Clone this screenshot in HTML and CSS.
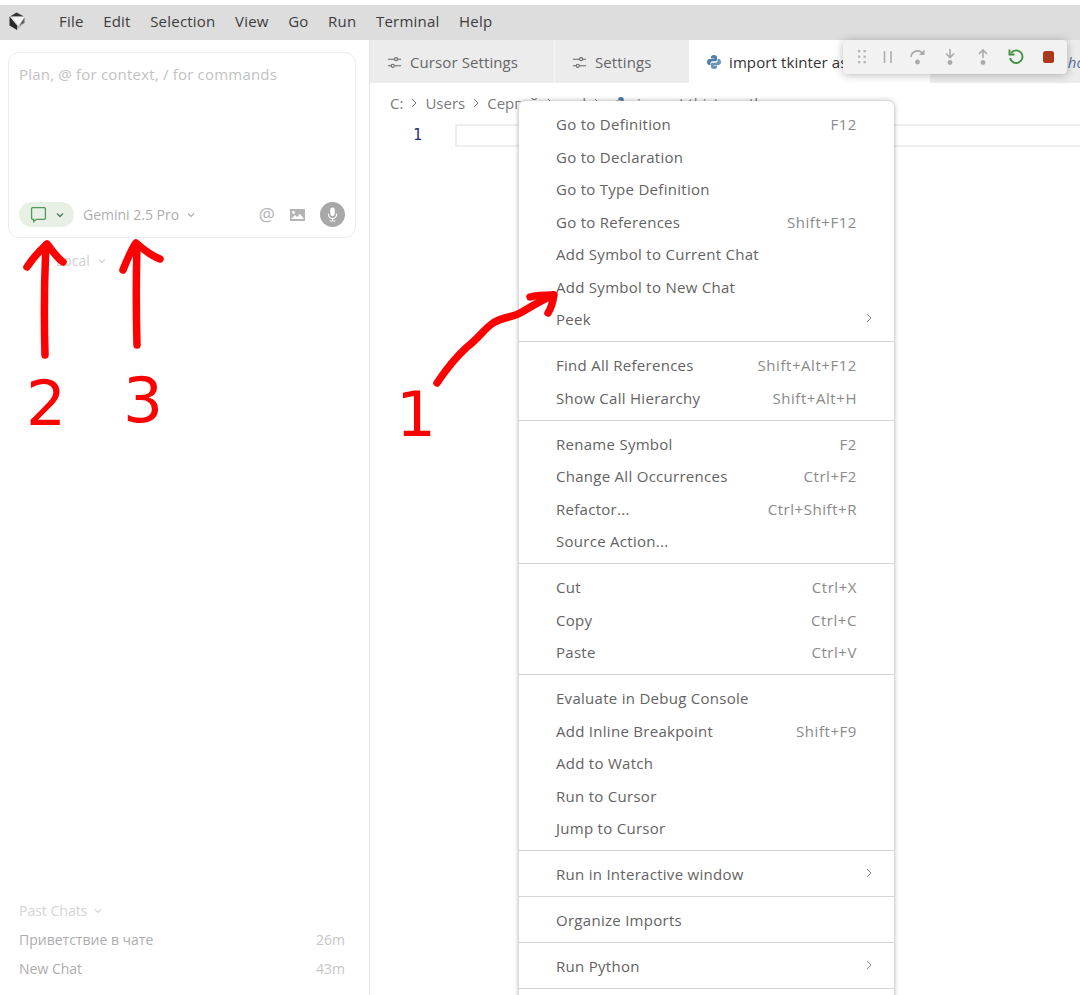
FILE: index.html
```html
<!DOCTYPE html>
<html lang="en">
<head>
<meta charset="utf-8">
<title>Cursor</title>
<link rel="stylesheet" href="styles.css">
</head>
<body>
<div class="app">
  <header class="menubar">
    <svg class="logo" viewBox="0 0 18 18"><polygon points="8.500,0.500 16,4.500 2,4.500" fill="#333"/><polygon points="1.500,4.500 9.500,14 9,18 1.500,13.500" fill="#2a2a2a"/><polygon points="16.500,5 16.500,11 11,14" fill="#666"/><polygon points="9.500,14 16,11.500 9,18" fill="#b5b5b5"/><polygon points="4,4.800 17,4.800 10.500,13" fill="#f4f4f4"/></svg>
    <nav class="menus"><span>File</span><span>Edit</span><span>Selection</span><span>View</span><span>Go</span><span>Run</span><span>Terminal</span><span>Help</span></nav>
  </header>
  <div class="main">
    <aside class="sidebar">
      <div class="sidebar-top">
        <div class="composer">
          <div class="placeholder">Plan, @ for context, / for commands</div>
          <div class="composer-bar">
            <div class="mode-pill">
              <svg class="pill-chat" viewBox="0 0 16 16"><path d="M2.500 1.500h11a1 1 0 0 1 1 1v9a1 1 0 0 1-1 1H6l-2.500 2.200V12.500h-1a1 1 0 0 1-1-1v-9a1 1 0 0 1 1-1z" fill="none" stroke="#4c9a55" stroke-width="1.200"/></svg>
              <svg class="chev chev-green" viewBox="0 0 10 10"><path d="M2 3.500 5 6.500 8 3.500" fill="none" stroke="#4a7a55" stroke-width="1.300"/></svg>
            </div>
            <div class="model">Gemini 2.5 Pro <svg class="chev" viewBox="0 0 10 10"><path d="M2 3.500 5 6.500 8 3.500" fill="none" stroke="#aaa" stroke-width="1.100"/></svg></div>
            <div class="bar-icons">
              <span class="at">@</span>
              <svg class="img-icon" viewBox="0 0 17 14"><path d="M1 1h15v12H1z" fill="#b4b4b4"/><circle cx="4.500" cy="4.500" r="1.400" fill="#fff"/><path d="M2 11 6 7 8 9 11 6 15 11z" fill="#fff"/></svg>
              <div class="mic"><svg viewBox="0 0 16 20"><rect x="5.200" y="1.500" width="5.600" height="10.500" rx="2.800" fill="#fff"/><path d="M3 9v1a5 5 0 0 0 10 0V9M8 15v3M4.500 18h7" fill="none" stroke="#fff" stroke-width="1.400"/></svg></div>
            </div>
          </div>
        </div>
        <div class="local">Local <svg class="chev" viewBox="0 0 10 10"><path d="M2 3.500 5 6.500 8 3.500" fill="none" stroke="#d0d0d0" stroke-width="1.100"/></svg></div>
      </div>
      <div class="past">
        <div class="past-head">Past Chats <svg class="chev" viewBox="0 0 10 10"><path d="M2 3.500 5 6.500 8 3.500" fill="none" stroke="#d5d5d5" stroke-width="1.100"/></svg></div>
        <div class="past-row"><span>Приветствие в чате</span><span class="past-time">26m</span></div>
        <div class="past-row"><span>New Chat</span><span class="past-time">43m</span></div>
      </div>
    </aside>
    <section class="editor">
      <div class="tabs">
        <div class="tab tab-one"><svg class="tab-icon" viewBox="0 0 16 16"><path d="M1 4.500h7M11.500 4.500H15M1 11.500h3.500M8 11.500h7" fill="none" stroke="#666" stroke-width="1.100"/><circle cx="9.700" cy="4.500" r="1.700" fill="none" stroke="#666" stroke-width="1.100"/><circle cx="6.200" cy="11.500" r="1.700" fill="none" stroke="#666" stroke-width="1.100"/></svg>Cursor Settings</div>
        <div class="tab tab-two"><svg class="tab-icon" viewBox="0 0 16 16"><path d="M1 4.500h7M11.500 4.500H15M1 11.500h3.500M8 11.500h7" fill="none" stroke="#666" stroke-width="1.100"/><circle cx="9.700" cy="4.500" r="1.700" fill="none" stroke="#666" stroke-width="1.100"/><circle cx="6.200" cy="11.500" r="1.700" fill="none" stroke="#666" stroke-width="1.100"/></svg>Settings</div>
        <div class="tab tab-active"><svg class="py" viewBox="0 0 16 16"><path d="M8 1C5.500 1 5 2 5 3v1.500h3.200V5H3.500C2 5 1 6 1 8s1 3 2.200 3H4.500V9.300C4.500 8 5.500 7.200 6.600 7.200h3C10.500 7.200 11 6.600 11 5.800V3C11 2 10 1 8 1z" fill="#4f7ea8"/><path d="M8 15c2.500 0 3-1 3-2v-1.500H7.800V11h4.700c1.500 0 2.500-1 2.500-3s-1-3-2.200-3H11.500v1.700c0 1.300-1 2.100-2.100 2.100h-3C5.500 8.800 5 9.400 5 10.200V13c0 1 1 2 3 2z" fill="#6a94b8"/></svg>import tkinter as</div>
        <div class="tab-rest"><i>ho</i></div>
      </div>
      <div class="crumbs">
        <span>C:</span><svg class="sep" viewBox="0 0 6 10"><path d="M1 1l4 4-4 4" fill="none" stroke="#777" stroke-width="1"/></svg><span>Users</span><svg class="sep" viewBox="0 0 6 10"><path d="M1 1l4 4-4 4" fill="none" stroke="#777" stroke-width="1"/></svg><span>Сергей</span><svg class="sep" viewBox="0 0 6 10"><path d="M1 1l4 4-4 4" fill="none" stroke="#777" stroke-width="1"/></svg><span>cod</span><svg class="sep" viewBox="0 0 6 10"><path d="M1 1l4 4-4 4" fill="none" stroke="#777" stroke-width="1"/></svg><svg class="py py-small" viewBox="0 0 16 16"><path d="M8 1C5.500 1 5 2 5 3v1.500h3.200V5H3.500C2 5 1 6 1 8s1 3 2.200 3H4.500V9.300C4.500 8 5.500 7.200 6.600 7.200h3C10.500 7.200 11 6.600 11 5.800V3C11 2 10 1 8 1z" fill="#4f7ea8"/></svg><span>import thistpy.pth</span>
      </div>
      <div class="code-line"><span class="line-no">1</span><div class="line-box"></div></div>
    </section>
  </div>

  <div class="debugbar">
    <svg viewBox="0 0 10 16" class="dbg dbg-grip"><g fill="#b5b5b5"><rect x="1" y="1" width="2.300" height="2.300"/><rect x="6.500" y="1" width="2.300" height="2.300"/><rect x="1" y="6.500" width="2.300" height="2.300"/><rect x="6.500" y="6.500" width="2.300" height="2.300"/><rect x="1" y="12" width="2.300" height="2.300"/><rect x="6.500" y="12" width="2.300" height="2.300"/></g></svg>
    <svg viewBox="0 0 12 16" class="dbg dbg-pause"><path d="M2.500 2v12M9 2v12" stroke="#aaa" stroke-width="1.500" fill="none"/></svg>
    <svg viewBox="0 0 18 18" class="dbg"><path d="M2 9a6.500 6.500 0 0 1 12-3" fill="none" stroke="#aaa" stroke-width="1.600"/><path d="M15.500 1.500V7H10z" fill="#aaa"/><circle cx="8.500" cy="14" r="2.400" fill="#aaa"/></svg>
    <svg viewBox="0 0 18 18" class="dbg"><path d="M9 1v8M5 5.500 9 9.500l4-4" fill="none" stroke="#aaa" stroke-width="1.600"/><circle cx="9" cy="14.500" r="2.400" fill="#aaa"/></svg>
    <svg viewBox="0 0 18 18" class="dbg"><path d="M9 10V2M5 6l4-4 4 4" fill="none" stroke="#aaa" stroke-width="1.600"/><circle cx="9" cy="14.500" r="2.400" fill="#aaa"/></svg>
    <svg viewBox="0 0 18 18" class="dbg"><path d="M4.200 4.800A6.300 6.300 0 1 1 3 10" fill="none" stroke="#3f8f3f" stroke-width="1.900"/><path d="M2.500 1.500v5h5" fill="none" stroke="#3f8f3f" stroke-width="1.900"/></svg>
    <div class="dbg-stop"></div>
  </div>

  <div class="context-menu">
    <div class="menu-group">
      <div class="item"><span>Go to Definition</span><kbd>F12</kbd></div>
      <div class="item"><span>Go to Declaration</span></div>
      <div class="item"><span>Go to Type Definition</span></div>
      <div class="item"><span>Go to References</span><kbd>Shift+F12</kbd></div>
      <div class="item"><span>Add Symbol to Current Chat</span></div>
      <div class="item"><span>Add Symbol to New Chat</span></div>
      <div class="item"><span>Peek</span><svg class="sub" viewBox="0 0 8 12"><path d="M2 2l4 4-4 4" fill="none" stroke="#888" stroke-width="1"/></svg></div>
    </div>
    <div class="menu-group">
      <div class="item"><span>Find All References</span><kbd>Shift+Alt+F12</kbd></div>
      <div class="item"><span>Show Call Hierarchy</span><kbd>Shift+Alt+H</kbd></div>
    </div>
    <div class="menu-group">
      <div class="item"><span>Rename Symbol</span><kbd>F2</kbd></div>
      <div class="item"><span>Change All Occurrences</span><kbd>Ctrl+F2</kbd></div>
      <div class="item"><span>Refactor...</span><kbd>Ctrl+Shift+R</kbd></div>
      <div class="item"><span>Source Action...</span></div>
    </div>
    <div class="menu-group">
      <div class="item"><span>Cut</span><kbd>Ctrl+X</kbd></div>
      <div class="item"><span>Copy</span><kbd>Ctrl+C</kbd></div>
      <div class="item"><span>Paste</span><kbd>Ctrl+V</kbd></div>
    </div>
    <div class="menu-group">
      <div class="item"><span>Evaluate in Debug Console</span></div>
      <div class="item"><span>Add Inline Breakpoint</span><kbd>Shift+F9</kbd></div>
      <div class="item"><span>Add to Watch</span></div>
      <div class="item"><span>Run to Cursor</span></div>
      <div class="item"><span>Jump to Cursor</span></div>
    </div>
    <div class="menu-group">
      <div class="item"><span>Run in Interactive window</span><svg class="sub" viewBox="0 0 8 12"><path d="M2 2l4 4-4 4" fill="none" stroke="#888" stroke-width="1"/></svg></div>
    </div>
    <div class="menu-group">
      <div class="item"><span>Organize Imports</span></div>
    </div>
    <div class="menu-group">
      <div class="item"><span>Run Python</span><svg class="sub" viewBox="0 0 8 12"><path d="M2 2l4 4-4 4" fill="none" stroke="#888" stroke-width="1"/></svg></div>
    </div>
    <div class="menu-group"></div>
  </div>

  <svg class="marks" viewBox="0 0 1080 995">
    <g fill="none" stroke="#ff0000" stroke-width="7.500" stroke-linecap="round" stroke-linejoin="round">
      <path d="M45 355C44 320 44 285 46 245"/>
      <path d="M27 267C33 258 40 250 47 244 52 250 57 258 63 262"/>
      <path d="M137 345C136 310 136 280 137 245"/>
      <path d="M123 270C127 260 131 250 136 243 144 250 152 256 160 259"/>
      <path d="M437 383C447 368 456 357 467 347 478 339 484 329 493 323 505 316 512 318 522 312 532 306 542 300 553 295"/>
      <path d="M530 297C537 295 546 295 554 295 553 301 552 307 548 313"/>
    </g>
    <text class="mark-num" x="26" y="425">2</text>
    <text class="mark-num" x="123" y="422">3</text>
    <text class="mark-num" x="396" y="436">1</text>
  </svg>
</div>
</body>
</html>
```

FILE: styles.css
```css
* { box-sizing: border-box; }
html, body { margin: 0; padding: 0; background: #fff; }
body { font-family: "Open Sans", "Noto Sans", sans-serif; overflow: hidden; }

.app {
  position: relative;
  width: 1080px;
  height: 995px;
  padding-top: 5px;
  display: flex;
  flex-direction: column;
  overflow: hidden;
}

.menubar {
  height: 35px;
  flex: none;
  background: #dddddd;
  display: flex;
  align-items: center;
  padding: 0 0 3px 8px;
  color: #3c3c3c;
  font-size: 15px;
  letter-spacing: 0.22px;
}
.logo { width: 18px; height: 18px; flex: none; }
.menus { display: flex; gap: 19.500px; margin-left: 33px; }

.main { flex: 1; display: flex; min-height: 0; }

.sidebar {
  width: 370px;
  flex: none;
  border-right: 1px solid #e4e4e4;
  display: flex;
  flex-direction: column;
  justify-content: space-between;
  padding: 12px 13px 0 8px;
}
.composer {
  height: 186px;
  border: 1px solid #ececec;
  border-radius: 11px;
  display: flex;
  flex-direction: column;
  justify-content: space-between;
  padding: 11px 10px 10px 10px;
}
.placeholder { color: #c2c2c2; font-size: 15px; line-height: 20px; letter-spacing: 0.2px; }
.composer-bar { display: flex; align-items: center; height: 25px; }
.mode-pill {
  width: 55px;
  height: 25px;
  border-radius: 13px;
  background: #e8f0e6;
  display: flex;
  align-items: center;
  padding-left: 11px;
  gap: 8px;
}
.pill-chat { width: 17px; height: 17px; }
.chev { width: 10px; height: 10px; display: inline-block; }
.model {
  margin-left: 9px;
  color: #aeaeae;
  font-size: 14px;
  display: flex;
  align-items: center;
  gap: 7px;
}
.bar-icons { margin-left: auto; display: flex; align-items: center; }
.at { color: #b4b4b4; font-size: 18px; line-height: 25px; }
.img-icon { width: 17px; height: 14px; margin-left: 14px; }
.mic {
  width: 25px;
  height: 25px;
  border-radius: 50%;
  background: #a8a8a8;
  margin-left: 14px;
  display: flex;
  align-items: center;
  justify-content: center;
}
.mic svg { width: 13px; height: 17px; }
.local {
  color: #d0d0d0;
  font-size: 14px;
  margin: 13px 0 0 48px;
  display: flex;
  align-items: center;
  gap: 7px;
}

.past { padding: 0 11px 12px 11px; font-size: 14px; }
.past-head { color: #d4d4d4; height: 29px; display: flex; align-items: center; gap: 6px; }
.past-row { display: flex; justify-content: space-between; align-items: center; height: 29px; color: #adadad; }
.past-time { color: #c6c6c6; }

.editor { flex: 1; min-width: 0; display: flex; flex-direction: column; }
.tabs { display: flex; height: 43px; flex: none; font-size: 15px; letter-spacing: 0.1px; color: #666; }
.tab { display: flex; align-items: center; height: 43px; padding-top: 1px; background: #ececec; flex: none; overflow: hidden; white-space: nowrap; }
.tab-one { width: 185px; padding-left: 17px; border-right: 1px solid #f4f4f4; }
.tab-two { width: 134px; padding-left: 17px; }
.tab-active { width: 241px; background: #fff; color: #333; padding-left: 17px; }
.tab-icon { width: 15px; height: 15px; margin-right: 8px; }
.py { width: 16px; height: 16px; margin-right: 7px; flex: none; }
.tab-rest {
  flex: 1;
  background: #ececec;
  display: flex;
  align-items: center;
  justify-content: flex-end;
  color: #56719a;
  overflow: hidden;
}
.tab-rest i { margin-right: -5px; }

.crumbs {
  height: 40px;
  display: flex;
  align-items: center;
  padding-left: 20px;
  color: #7a7a7a;
  font-size: 15px;
  white-space: nowrap;
}
.crumbs .sep { width: 6px; height: 10px; margin: 0 8px; flex: none; }
.py-small { width: 14px; height: 14px; margin-right: 9px; margin-left: 6px; }

.code-line { display: flex; align-items: center; height: 23px; margin-top: 1px; }
.line-no {
  width: 85px;
  text-align: right;
  padding: 0 33px 1px 0;
  color: #26307a;
  font-family: "DejaVu Sans Mono", monospace;
  font-size: 15px;
}
.line-box { flex: 1; height: 23px; border: 2px solid #eeeeee; border-right: 0; }

.debugbar {
  position: absolute;
  left: 843px;
  top: 40px;
  width: 224px;
  height: 34px;
  background: #f2f2f2;
  border-radius: 4px;
  box-shadow: 0 1px 8px rgba(0, 0, 0, 0.28);
  display: flex;
  align-items: center;
  padding: 0 13px 0 14px;
  justify-content: space-between;
}
.dbg { width: 18px; height: 18px; flex: none; }
.dbg-grip { width: 10px; height: 16px; }
.dbg-pause { width: 12px; height: 16px; }
.dbg-stop { width: 11px; height: 12px; margin-left: 3px; background: #a83a1a; border-radius: 2.500px; flex: none; }

.context-menu {
  position: absolute;
  left: 519px;
  top: 101px;
  width: 375px;
  height: 920px;
  background: #fff;
  border-radius: 6px;
  box-shadow: 0 0 5px rgba(0, 0, 0, 0.35);
  color: #636363;
  font-size: 15px;
  letter-spacing: 0.28px;
}
.menu-group { padding: 7px 0 5.500px; border-bottom: 1px solid #d4d4d4; }
.menu-group:last-child { border-bottom: 0; }
.item {
  height: 32.500px;
  display: flex;
  align-items: center;
  justify-content: space-between;
  padding: 0 37px;
  white-space: nowrap;
}
.item kbd { font: inherit; color: #8a8a8a; letter-spacing: 0.55px; }
.sub { width: 8px; height: 12px; margin-right: -16px; margin-top: -3px; }

.marks { position: absolute; left: 0; top: 0; width: 1080px; height: 995px; pointer-events: none; }
.mark-num { font-family: "DejaVu Sans", sans-serif; font-size: 63px; fill: #ff0000; }
```
